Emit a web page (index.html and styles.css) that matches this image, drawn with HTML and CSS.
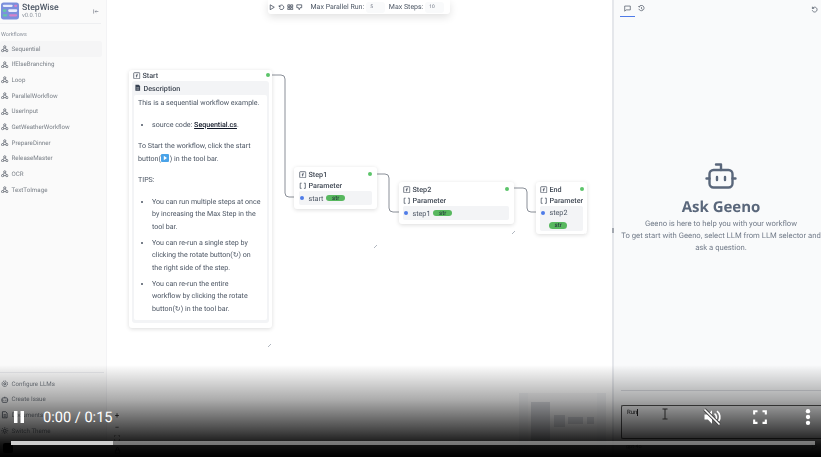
FILE: index.html
```html
<!DOCTYPE html>
<html lang="en">
<head>
<meta charset="utf-8">
<title>StepWise</title>
<link rel="stylesheet" href="styles.css">
</head>
<body>
<svg class="defs" width="0" height="0" aria-hidden="true">
  <symbol id="flow" viewBox="0 0 16 16"><g fill="none" stroke="currentColor" stroke-width="1.500"><circle cx="8" cy="4" r="2.400"/><circle cx="3.400" cy="12" r="2.400"/><circle cx="12.600" cy="12" r="2.400"/><path d="M6.800 6 4.600 10M9.200 6l2.200 4M5.800 12h4.400"/></g></symbol>
  <symbol id="fn" viewBox="0 0 16 16"><g fill="none" stroke="currentColor" stroke-width="1.500"><rect x="1.500" y="1.500" width="13" height="13" rx="1.500"/><path d="M10 5H8.200L7.400 11.500M6 8h3.500"/></g></symbol>
  <symbol id="br" viewBox="0 0 16 16"><path d="M5.500 2.500h-3v11h3M10.500 2.500h3v11h-3" fill="none" stroke="currentColor" stroke-width="1.500"/></symbol>
  <symbol id="bot" viewBox="0 0 32 26"><g fill="none" stroke="currentColor" stroke-width="2.400" stroke-linecap="round" stroke-linejoin="round"><path d="M16 7V1.500h-5"/><rect x="4.500" y="7" width="23" height="17.500" rx="4"/><path d="M1.500 15.500h3M27.500 15.500h3M12 14v3M20 14v3"/></g></symbol>
</svg>

<div class="app">
  <aside class="sidebar">
    <header class="brand">
      <svg class="logo" viewBox="0 0 20 19"><rect width="20" height="19" rx="3" fill="#7b8fdc"/><rect x="2" y="2.500" width="11" height="2.500" rx="1.200" fill="#e8ecfb"/><rect x="14.500" y="2.500" width="3.500" height="2.500" rx="1.200" fill="#d682c8"/><rect x="2" y="7.500" width="4" height="3" rx="1.200" fill="#63c7a6"/><rect x="8" y="7.500" width="10" height="3" rx="1.200" fill="#e8ecfb"/><rect x="2" y="13" width="5" height="2.500" rx="1.200" fill="#63c7a6"/><rect x="9" y="13" width="9" height="2.500" rx="1.200" fill="#d682c8"/></svg>
      <div class="brand-text">
        <div class="brand-name">StepWise</div>
        <div class="brand-version">v0.0.10</div>
      </div>
      <svg class="collapse" viewBox="0 0 10 8"><path d="M1 0.500v7M9 4H3.500M5.500 2 3.500 4l2 2" fill="none" stroke="#6b7280" stroke-width="1"/></svg>
    </header>
    <div class="group-label">Workflows</div>
    <nav class="wf-list">
      <a class="wf-item active"><svg class="ico"><use href="#flow"/></svg>Sequential</a>
      <a class="wf-item"><svg class="ico"><use href="#flow"/></svg>IfElseBranching</a>
      <a class="wf-item"><svg class="ico"><use href="#flow"/></svg>Loop</a>
      <a class="wf-item"><svg class="ico"><use href="#flow"/></svg>ParallelWorkflow</a>
      <a class="wf-item"><svg class="ico"><use href="#flow"/></svg>UserInput</a>
      <a class="wf-item"><svg class="ico"><use href="#flow"/></svg>GetWeatherWorkflow</a>
      <a class="wf-item"><svg class="ico"><use href="#flow"/></svg>PrepareDinner</a>
      <a class="wf-item"><svg class="ico"><use href="#flow"/></svg>ReleaseMaster</a>
      <a class="wf-item"><svg class="ico"><use href="#flow"/></svg>OCR</a>
      <a class="wf-item"><svg class="ico"><use href="#flow"/></svg>TextToImage</a>
    </nav>
    <div class="side-foot">
      <a class="wf-item"><svg class="ico" viewBox="0 0 16 16"><g fill="none" stroke="currentColor" stroke-width="1.800"><circle cx="8" cy="8" r="2.200"/><circle cx="8" cy="8" r="5.800" stroke-dasharray="3 1.500"/></g></svg>Configure LLMs</a>
      <a class="wf-item"><svg class="ico" viewBox="0 0 16 16"><g fill="none" stroke="currentColor" stroke-width="1.800"><path d="M8 4V1.500"/><rect x="2.500" y="4" width="11" height="9.500" rx="1.500"/><path d="M0.500 8.500h2M13.500 8.500h2M6 8v2M10 8v2"/></g></svg>Create Issue</a>
      <a class="wf-item"><svg class="ico" viewBox="0 0 16 16"><path d="M3 1.500h7l3 3v10H3zM5.500 8h5M5.500 11h5" fill="none" stroke="currentColor" stroke-width="1.800"/></svg>Documents</a>
      <a class="wf-item"><svg class="ico" viewBox="0 0 16 16"><g fill="none" stroke="currentColor" stroke-width="1.800"><circle cx="8" cy="8" r="3"/><path d="M8 0.500v2.500M8 13v2.500M0.500 8H3M13 8h2.500M2.700 2.700l1.800 1.800M11.500 11.500l1.800 1.800M2.700 13.300l1.800-1.800M11.500 4.500l1.800-1.800"/></g></svg>Switch Theme</a>
      <div class="user-row"><span class="avatar"></span></div>
    </div>
  </aside>

  <main class="canvas">
    <div class="toolbar">
      <div class="tool-icons">
        <svg class="tool-ico" viewBox="0 0 8 8"><path d="M1.500 1v6l5-3z" fill="none" stroke="#374151" stroke-width=".9"/></svg>
        <svg class="tool-ico" viewBox="0 0 8 8"><path d="M1.500 1.500v2h2M1.600 3.500a2.800 2.800 0 1 1 .2 1.800" fill="none" stroke="#374151" stroke-width=".9"/></svg>
        <svg class="tool-ico" viewBox="0 0 8 8"><path d="M1 1h2.500v2.500H1zM4.500 1H7v2.500H4.500zM1 4.500h2.500V7H1zM4.500 4.500H7V7H4.500z" fill="none" stroke="#374151" stroke-width=".9"/></svg>
        <svg class="tool-ico" viewBox="0 0 8 8"><path d="M1 1h6v3.500H5L4 7 3 4.500H1z" fill="none" stroke="#374151" stroke-width=".9"/></svg>
      </div>
      <label class="tool-label tool-first">Max Parallel Run:</label><span class="tool-input">5</span>
      <label class="tool-label">Max Steps:</label><span class="tool-input">10</span>
    </div>

    <svg class="edges" viewBox="0 0 505 457" width="505" height="457">
      <g fill="none" stroke="#8a8f98" stroke-width="1">
        <path d="M161 75h13a4 4 0 0 1 4 4v114a4 4 0 0 0 4 4h12"/>
        <path d="M265 174h13a4 4 0 0 1 4 4v30a4 4 0 0 0 4 4h13"/>
        <path d="M403 188h13a4 4 0 0 1 4 4v16a4 4 0 0 0 4 4h13"/>
      </g>
      <g stroke="#9ca3af" stroke-width=".8">
        <path d="M161 347l3-3M267 248l3-3M405 234l3-3M477 234l3-3"/>
      </g>
    </svg>

    <section class="node node-start">
      <div class="node-head"><svg class="nico"><use href="#fn"/></svg>Start<i class="dot out"></i></div>
      <div class="desc">
        <div class="desc-title"><svg class="nico" viewBox="0 0 16 16"><path d="M3 1.500h7l3 3v10H3z" fill="#374151"/><path d="M5 8h6M5 11h6" stroke="#fff"/></svg>Description</div>
        <div class="md">
          <p>This is a sequential workflow example.</p>
          <ul><li>source code: <a>Sequential.cs</a>.</li></ul>
          <p>To Start the workflow, click the start<br>button(<svg class="emoji" viewBox="0 0 8 8"><rect width="8" height="8" rx="1" fill="#4aa3e8"/><path d="M2.800 1.800v4.400L6 4z" fill="#fff"/></svg>) in the tool bar.</p>
          <p>TIPS:</p>
          <ul>
            <li>You can run multiple steps at once<br>by increasing the Max Step in the<br>tool bar.</li>
            <li>You can re-run a single step by<br>clicking the rotate button(↻) on<br>the right side of the step.</li>
            <li>You can re-run the entire<br>workflow by clicking the rotate<br>button(↻) in the tool bar.</li>
          </ul>
        </div>
      </div>
    </section>

    <section class="node node-step1">
      <div class="node-head"><svg class="nico"><use href="#fn"/></svg>Step1<i class="dot out"></i></div>
      <div class="node-head"><svg class="nico"><use href="#br"/></svg>Parameter</div>
      <div class="param"><i class="dot in"></i>start<span class="pill">str</span></div>
    </section>

    <section class="node node-step2">
      <div class="node-head"><svg class="nico"><use href="#fn"/></svg>Step2<i class="dot out"></i></div>
      <div class="node-head"><svg class="nico"><use href="#br"/></svg>Parameter</div>
      <div class="param"><i class="dot in"></i>step1<span class="pill">str</span></div>
    </section>

    <section class="node node-end">
      <div class="node-head"><svg class="nico"><use href="#fn"/></svg>End<i class="dot out"></i></div>
      <div class="node-head"><svg class="nico"><use href="#br"/></svg>Parameter</div>
      <div class="param param-wrap"><i class="dot in"></i>step2<span class="pill">str</span></div>
    </section>

    <div class="flow-ctl">
      <span>+</span><span>−</span><span>⛶</span>
      <svg class="lock" viewBox="0 0 8 8"><path d="M1.500 3.500h5V7h-5zM2.700 3.500V2a1.300 1.300 0 0 1 2.600 0v1.500" fill="none" stroke="#111" stroke-width=".9"/></svg>
    </div>
    <div class="minimap"><div class="mini-view"><b class="m1"></b><b class="m2"></b><b class="m3"></b><b class="m4"></b></div></div>
  </main>

  <aside class="chat">
    <header class="chat-head">
      <span class="tab tab-on"><svg class="chat-ico" viewBox="0 0 10 10"><path d="M1 1.500h8v5.500H3L1 8.800z" fill="none" stroke="#374151" stroke-width=".9"/></svg></span>
      <span class="tab"><svg class="chat-ico" viewBox="0 0 10 10"><path d="M1.500 2.500a3.800 3.800 0 1 1-.3 3M5 3v2.300l1.500 1M.8 1.500l.8 1.500 1.500-.6" fill="none" stroke="#374151" stroke-width=".9"/></svg></span>
      <svg class="chat-ico reset" viewBox="0 0 10 10"><path d="M2 1v2.500h2.500M2.100 3.500a3.500 3.500 0 1 1-.3 2.500" fill="none" stroke="#374151" stroke-width=".9"/></svg>
    </header>
    <div class="ask">
      <svg class="bot"><use href="#bot"/></svg>
      <h1>Ask Geeno</h1>
      <p>Geeno is here to help you with your workflow<br>To get start with Geeno, select LLM from LLM selector and ask a question.</p>
    </div>
    <div class="composer">
      <div class="textarea">Run<span class="caret"></span></div>
      <div class="model"><span>gpt-4o</span><svg class="send" viewBox="0 0 10 10"><path d="M1 1l8 4-8 4 1.500-4z" fill="none" stroke="#9ca3af"/></svg></div>
    </div>
  </aside>
</div>

<div class="video">
  <div class="video-row">
    <svg class="pause" viewBox="0 0 10 12"><path d="M0 0h3.500v12H0zM6.500 0H10v12H6.500z" fill="#fff"/></svg>
    <span class="time">0:00 / 0:15</span>
    <svg class="ibeam" viewBox="0 0 8 12"><path d="M1.500 1h5M1.500 11h5M4 1v10" fill="none" stroke="#222" stroke-width="1"/></svg>
    <svg class="vbtn vb-mute" viewBox="0 0 24 24"><path d="M3 9v6h4l5 5V4L7 9z" fill="#fff"/><path d="M15 8a5 5 0 0 1 1.500 7M18 5a9 9 0 0 1 2 12" fill="none" stroke="#fff" stroke-width="2"/><path d="M3 3l18 18" stroke="#444" stroke-width="4"/><path d="M3 3l18 18" stroke="#fff" stroke-width="2"/></svg>
    <svg class="vbtn vb-gap" viewBox="0 0 24 24"><path d="M5 9V5h4M15 5h4v4M19 15v4h-4M9 19H5v-4" fill="none" stroke="#fff" stroke-width="2.500"/></svg>
    <svg class="vbtn vb-gap" viewBox="0 0 24 24"><circle cx="12" cy="5" r="2.600" fill="#fff"/><circle cx="12" cy="12" r="2.600" fill="#fff"/><circle cx="12" cy="19" r="2.600" fill="#fff"/></svg>
  </div>
  <div class="progress"><div class="played"></div></div>
</div>
</body>
</html>
```

FILE: styles.css
```css
* { box-sizing: border-box; }
html, body { margin: 0; height: 100%; }
body { width: 821px; height: 457px; overflow: hidden; position: relative; background: #fff; font-family: Roboto, "Liberation Sans", sans-serif; color: #374151; text-rendering: geometricPrecision; }
.defs { position: absolute; }

.app { display: flex; width: 821px; height: 457px; filter: blur(.4px); }

.sidebar { width: 107px; height: 457px; flex: none; display: flex; flex-direction: column; background: #fafafa; border-right: 1px solid #f3f3f5; }
.brand { height: 24px; margin: 0 5px 0 0; padding: 0 0 1px 1px; display: flex; align-items: center; gap: 3px; border-bottom: 1px solid #eeeff1; }
.logo { width: 18px; height: 18px; flex: none; }
.brand-text { flex: 1; line-height: 1; }
.brand-name { font-size: 8.700px; color: #4b5563; font-weight: 500; line-height: 10px; }
.brand-version { font-size: 5.800px; color: #8b929c; line-height: 7px; }
.collapse { width: 6px; height: 5px; margin-right: 2px; }
.group-label { font-size: 5.500px; color: #8b929c; margin: 7px 0 0 1px; line-height: 8px; }
.wf-list { display: flex; flex-direction: column; margin-top: 2px; }
.wf-item { height: 15.650px; display: flex; align-items: center; gap: 3px; padding-left: 1px; margin-right: 4px; font-size: 6.200px; color: #7b8189; border-radius: 3px; }
.wf-item.active { background: #f5f5f6; }
.ico { width: 7.500px; height: 7.500px; flex: none; color: #4f5661; }
.side-foot { margin-top: auto; margin-right: 2px; padding-top: 3px; border-top: 1px solid #e8e9ec; }
.user-row { height: 18.500px; display: flex; align-items: center; padding-left: 3px; }
.avatar { width: 10px; height: 10px; background: #000; border-radius: 2px; }

.canvas { position: relative; flex: none; width: 505px; height: 457px; background: #fff; }
.toolbar { position: absolute; left: 161px; top: 0; width: 182px; height: 14px; display: flex; align-items: center; padding: 0 2px 0 1px; background: #fff; border-radius: 0 0 3px 3px; box-shadow: 0 3px 8px rgba(0,0,0,.12); }
.tool-icons { display: flex; gap: 2.500px; }
.tool-ico { width: 6.500px; height: 6.500px; }
.tool-label { font-size: 7px; color: #4b5563; white-space: nowrap; margin-right: 2px; }
.tool-first { margin-left: 8px; }
.tool-input { width: 22px; height: 11px; margin-right: 4px; padding-left: 4px; font-size: 4.800px; line-height: 11px; background: #f9fafb; border-radius: 3px; color: #6b7280; }
.edges { position: absolute; left: 0; top: 0; }

.node { position: absolute; background: #fff; border-radius: 3px; box-shadow: 0 1px 4px rgba(0,0,0,.14); padding: 0 4px; font-size: 7.500px; color: #374151; }
.node-head { display: flex; align-items: center; gap: 2px; height: 11px; font-size: 7.200px; font-weight: 500; color: #3f4753; position: relative; }
.nico { width: 7.500px; height: 7.500px; flex: none; color: #374151; }
.dot { position: absolute; width: 4px; height: 4px; border-radius: 50%; }
.out { background: #5cc46a; right: -2px; top: 3px; }
.in { position: static; background: #4f7be8; flex: none; margin: 0 4.500px 0 1px; }

.node-start { left: 22px; top: 70px; width: 143px; height: 258px; padding: 0 3px; }
.node-start .node-head { margin-left: 1px; }
.node-start .out { right: -1px; }
.desc { background: #f3f4f6; border-radius: 3px; padding: 0 2px 2px; height: 242px; }
.desc-title { display: flex; align-items: center; gap: 2px; height: 14px; font-weight: 500; font-size: 7.200px; color: #3f4753; }
.md { background: #fff; border-radius: 2px; padding: 2px 4px 0 4px; height: 225px; font-size: 7.080px; line-height: 12.500px; color: #4b5563; }
.md p { margin: 0 0 9px; }
.md ul { margin: 0 0 9px; padding: 0 0 0 14px; }
.md li { margin-bottom: 3.600px; }
.md ul:last-child { margin-bottom: 0; }
.md a { color: #111827; font-weight: 500; text-decoration: underline; }
.emoji { width: 8px; height: 8px; vertical-align: -1px; margin: 0 .5px; }

.node-step1 { left: 187px; top: 167px; width: 83px; height: 42px; padding: 2px 5px 0; }
.node-step2 { left: 292px; top: 182px; width: 115px; height: 42px; padding: 2px 5px 0 4px; }
.node-end { left: 429px; top: 182px; width: 51px; height: 52px; padding: 2px 4px 0; }
.node-step1 .out, .node-step2 .out { right: 0; }
.node-end .out { right: -1px; }
.param { height: 14px; margin-top: 0; display: flex; align-items: center; background: #f3f4f6; border-radius: 2px; font-size: 7.200px; color: #4b5563; }
.param-wrap { flex-wrap: wrap; height: 25px; padding-top: 0; }
.pill { height: 6.500px; padding: 0 5.500px; margin-left: 3px; border-radius: 4px; background: #58b85f; color: #1f2937; font-size: 6.200px; line-height: 6.500px; }
.param-wrap .pill { margin: 0 0 0 9px; }

.flow-ctl { position: absolute; left: 4px; top: 410px; width: 12px; display: flex; flex-direction: column; align-items: center; font-size: 8px; line-height: 11.500px; color: #111; }
.lock { width: 7px; height: 7px; margin-top: 2px; }
.minimap { position: absolute; left: 412px; top: 393px; width: 87px; height: 64px; padding: 0 9px; background: #f3f4f6; }
.mini-view { position: relative; height: 64px; background: #f8f8f9; }
.minimap b { position: absolute; background: #d9dbe0; }
.m1 { left: 3px; top: 9px; width: 19px; height: 39px; }
.m2 { left: 26px; top: 22px; width: 11px; height: 12px; }
.m3 { left: 40px; top: 24px; width: 15px; height: 7px; }
.m4 { left: 59px; top: 24px; width: 7px; height: 7px; }

.chat { flex: none; position: relative; width: 209px; height: 457px; display: flex; flex-direction: column; background: #f9fafb; border-left: 2px solid #e5e7eb; }
.chat::before { content: ""; position: absolute; left: -2px; top: 228px; width: 2px; height: 5px; background: #a3a8b0; }
.chat-head { display: flex; align-items: flex-start; height: 17px; padding-left: 6px; position: relative; }
.tab { width: 15px; height: 17px; display: flex; justify-content: center; align-items: center; }
.tab-on { border-bottom: 1px solid #4f7be8; }
.tab-on + .tab { width: 12px; }
.chat-ico { width: 7px; height: 7px; }
.reset { margin: 6px 3px 0 auto; }
.ask { height: 373px; padding: 146px 0 0 7px; display: flex; flex-direction: column; align-items: center; text-align: center; }
.bot { width: 32px; height: 26px; color: #5a677b; }
.ask h1 { margin: 7px 0 0; font-size: 15px; line-height: 22px; font-weight: 700; color: #5a677b; font-family: "Open Sans", Roboto, sans-serif; }
.ask p { margin: 0; font-size: 7.700px; line-height: 12px; color: #727b89; }
.composer { margin-left: 7px; border-top: 1px solid #d9dbe0; padding-top: 14px; }
.textarea { height: 34px; border: 1px solid #555; border-right: 0; border-radius: 2px 0 0 2px; padding: 3px 5px; font-size: 6px; line-height: 8px; color: #222; }
.caret { display: inline-block; width: .6px; height: 7px; background: #222; vertical-align: middle; }
.model { display: flex; justify-content: space-between; align-items: center; padding: 4px 3px 0 5px; font-size: 5.500px; color: #555; }
.send { width: 7px; height: 7px; }

.video { position: absolute; left: 0; right: 0; bottom: 0; height: 92px; background: linear-gradient(to bottom, rgba(0,0,0,0) 0, rgba(0,0,0,.06) 6%, rgba(0,0,0,.33) 38%, rgba(0,0,0,.72) 71%, rgba(0,0,0,.93) 87%, #000 100%); }
.video-row { position: absolute; left: 0; right: 0; top: 39px; height: 26px; display: flex; align-items: center; color: #fff; }
.pause { width: 10px; height: 12px; margin-left: 14px; }
.time { font-family: Roboto, "Liberation Sans", sans-serif; font-size: 14.600px; margin-left: 19px; }
.ibeam { width: 8px; height: 12px; margin: -6px 0 0 548px; }
.vbtn { width: 20px; height: 20px; }
.vb-mute { margin-left: 33px; }
.vb-gap { margin-left: 28px; }
.progress { position: absolute; left: 11px; top: 76px; width: 804px; height: 4px; background: rgba(255,255,255,.42); }
.played { width: 102px; height: 4px; background: #cfcfcf; }
```
